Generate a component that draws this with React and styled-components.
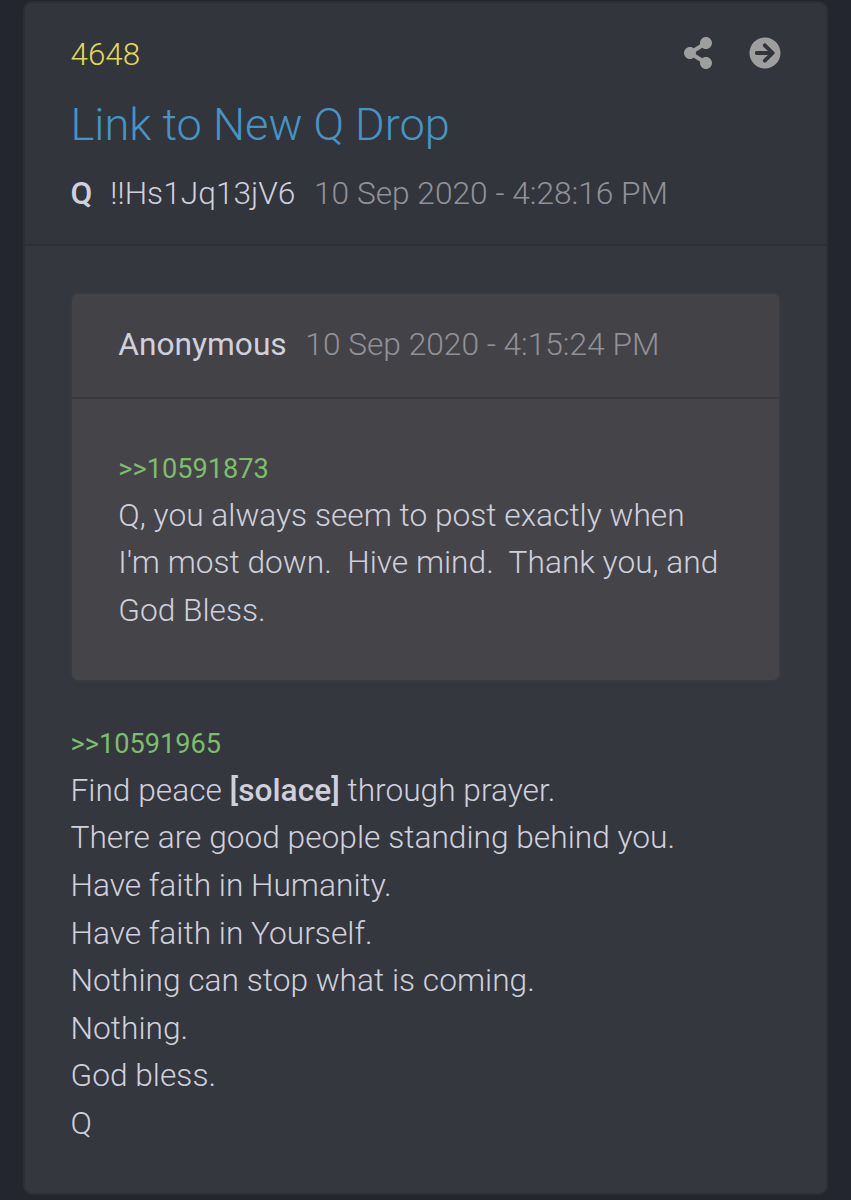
import React from 'react';
import styled, { createGlobalStyle } from 'styled-components';
import { FaShareAlt, FaArrowCircleRight } from 'react-icons/fa';

const Global = createGlobalStyle`
  * { box-sizing: border-box; }
  body { margin: 0; background: #23262f; font-family: Roboto, sans-serif; font-weight: 300; font-size: 31.7px; color: #d0d0dc; }
`;
const Page = styled.main`
  height: 1200px;
  padding: 1px 23px 5px;
  overflow: hidden;
`;
const Card = styled.article`
  height: 1194px;
  border: 2px solid #2d2f37;
  border-radius: 9px;
  background: #35373f;
  overflow: hidden;
`;
const Header = styled.header`
  height: 243px;
  padding: 27px 45px 0 45.5px;
  background: #33353c;
  border-bottom: 2px solid #2c2e35;
`;
const TopRow = styled.div`
  display: flex;
  justify-content: space-between;
  height: 48px;
  line-height: 48px;
`;
const DropNumber = styled.span`
  color: #e0db55;
  font-size: 31.4px;
  line-height: 49px;
`;
const Actions = styled.div`
  display: flex;
  align-items: center;
  gap: 35px;
  height: 46px;
  color: #9e9e9e;
`;
const Title = styled.h1`
  margin: 18px 0 16px;
  font-size: 45.2px;
  line-height: 58px;
  font-weight: 300;
  color: #4694c2;
`;
const Meta = styled.div`
  display: flex;
  line-height: 48px;
  white-space: pre;
`;
const Name = styled.strong`
  font-weight: ${p => p.$weight || 460};
`;
const Trip = styled.span`
  margin-left: 18px;
`;
const Time = styled.time`
  margin-left: 18.6px;
  color: #929198;
`;
const Body = styled.div`
  padding: 46px 45px 0;
`;
const Quote = styled.blockquote`
  margin: 0 0 39px;
  height: 390px;
  border: 2px solid #393a40;
  border-radius: 8px;
  background: #454549;
  overflow: hidden;
`;
const QuoteHead = styled.div`
  height: 105px;
  padding: 27px 46px 27px 46.3px;
  background: #434347;
  border-bottom: 2px solid #39393e;
`;
const QuoteBody = styled.div`
  padding: 47px 46px 47px 46.3px;
`;
const Reference = styled.div`
  color: #7dbd6d;
  font-size: 27.15px;
  font-weight: 400;
  line-height: 47px;
  height: 45.9px;
`;
const Line = styled.p`
  margin: 0;
  line-height: 47.6px;
  white-space: pre;
`;
const Reply = styled.section`
  padding-left: 0.5px;
`;

const quoteLines = [
  'Q, you always seem to post exactly when',
  "I'm most down.  Hive mind.  Thank you, and",
  'God Bless.',
];
const replyLines = [
  'There are good people standing behind you.',
  'Have faith in Humanity.',
  'Have faith in Yourself.',
  'Nothing can stop what is coming.',
  'Nothing.',
  'God bless.',
  'Q',
];

export default function App() {
  return (
    <Page>
      <Global />
      <Card>
        <Header>
          <TopRow>
            <DropNumber>4648</DropNumber>
            <Actions><FaShareAlt size={32} /><FaArrowCircleRight size={32} /></Actions>
          </TopRow>
          <Title>Link to New Q Drop</Title>
          <Meta><Name>Q</Name><Trip>!!Hs1Jq13jV6</Trip><Time>10 Sep 2020 - 4:28:16 PM</Time></Meta>
        </Header>
        <Body>
          <Quote>
            <QuoteHead>
              <Meta><Name $weight={400}>Anonymous</Name><Time>10 Sep 2020 - 4:15:24 PM</Time></Meta>
            </QuoteHead>
            <QuoteBody>
              <Reference>&gt;&gt;10591873</Reference>
              {quoteLines.map(line => <Line key={line}>{line}</Line>)}
            </QuoteBody>
          </Quote>
          <Reply>
            <Reference>&gt;&gt;10591965</Reference>
            <Line>Find peace <Name>[solace]</Name> through prayer.</Line>
            {replyLines.map(line => <Line key={line}>{line}</Line>)}
          </Reply>
        </Body>
      </Card>
    </Page>
  );
}
